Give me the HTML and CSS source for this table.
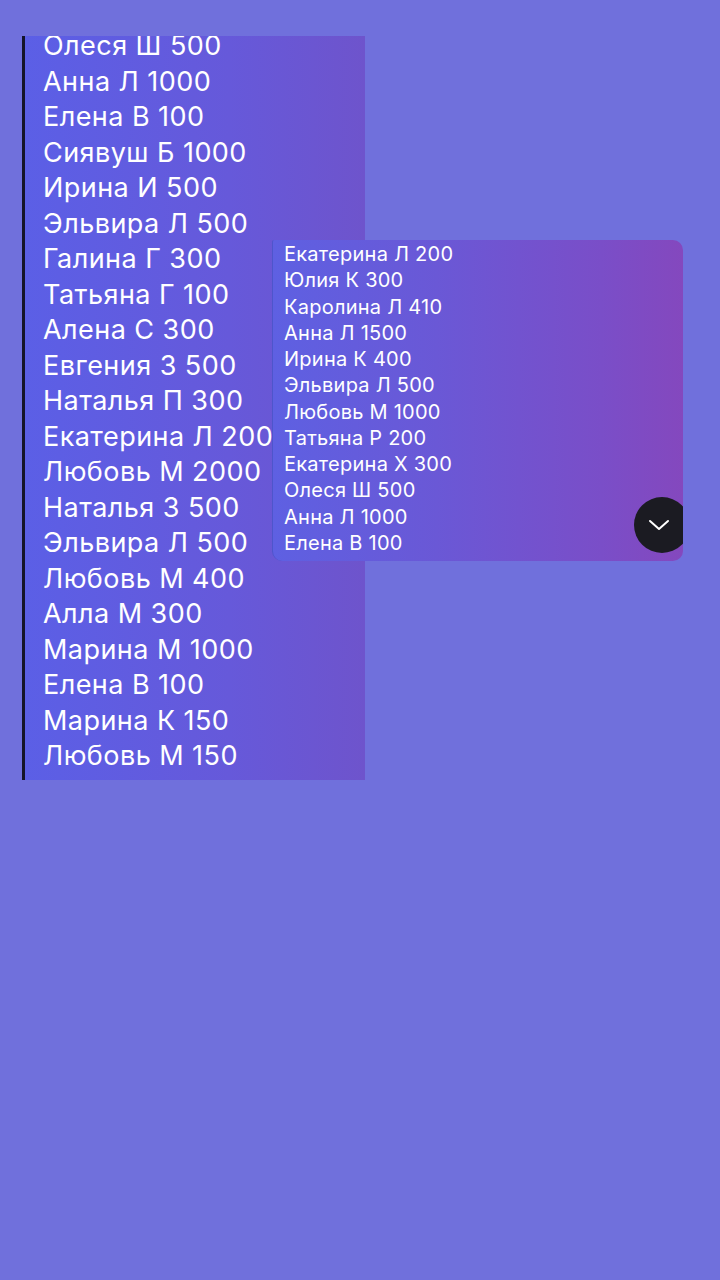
FILE: index.html
```html
<!DOCTYPE html>
<html lang="ru">
<head>
    <meta charset="UTF-8">
    <meta name="viewport" content="width=device-width, initial-scale=1.0">
    <title>Список</title>
    <link rel="stylesheet" href="styles.css">
</head>
<body>
    <div class="page">
        <div class="list-panel">
            <ul class="names">
                <li>Олеся Ш 500</li>
                <li>Анна Л 1000</li>
                <li>Елена В 100</li>
                <li>Сиявуш Б 1000</li>
                <li>Ирина И 500</li>
                <li>Эльвира Л 500</li>
                <li>Галина Г 300</li>
                <li>Татьяна Г 100</li>
                <li>Алена С 300</li>
                <li>Евгения З 500</li>
                <li>Наталья П 300</li>
                <li>Екатерина Л 200</li>
                <li>Любовь М 2000</li>
                <li>Наталья З 500</li>
                <li>Эльвира Л 500</li>
                <li>Любовь М 400</li>
                <li>Алла М 300</li>
                <li>Марина М 1000</li>
                <li>Елена В 100</li>
                <li>Марина К 150</li>
                <li>Любовь М 150</li>
            </ul>
        </div>

        <div class="popup-panel">
            <ul class="names small">
                <li>Екатерина Л 200</li>
                <li>Юлия К 300</li>
                <li>Каролина Л 410</li>
                <li>Анна Л 1500</li>
                <li>Ирина К 400</li>
                <li>Эльвира Л 500</li>
                <li>Любовь М 1000</li>
                <li>Татьяна Р 200</li>
                <li>Екатерина Х 300</li>
                <li>Олеся Ш 500</li>
                <li>Анна Л 1000</li>
                <li>Елена В 100</li>
            </ul>
            <button class="scroll-btn" aria-label="Вниз">
                <svg width="22" height="12" viewBox="0 0 22 12">
                    <path d="M2 2 L11 10 L20 2" fill="none" stroke="#fff" stroke-width="2" stroke-linecap="round" stroke-linejoin="round"/>
                </svg>
            </button>
        </div>
    </div>
</body>
</html>
```

FILE: styles.css
```css
body {
    margin: 0;
    padding: 0;
    background-color: #7070dc;
    font-family: Inter, "Noto Sans", sans-serif;
    color: #fff;
}
.page {
    position: relative;
    height: 1280px;
    padding-top: 36px;
    box-sizing: border-box;
}
.list-panel {
    margin-left: 22px;
    width: 340px;
    height: 744px;
    overflow: hidden;
    border-left: 3px solid #14142a;
    background: linear-gradient(90deg, #5b5fe6 0%, #6659da 60%, #6e54cc 100%);
}
.names {
    list-style: none;
    margin: -8px 0 0 0;
    padding: 0 0 0 18px;
    font-size: 27px;
    letter-spacing: 0.45px;
    line-height: 35.5px;
    white-space: nowrap;
}
.popup-panel {
    position: absolute;
    left: 272px;
    top: 240px;
    width: 411px;
    height: 321px;
    overflow: hidden;
    border-radius: 2px 10px 10px 10px;
    border-left: 1px solid #4e55cc;
    box-sizing: border-box;
    background: linear-gradient(90deg, #5e60e2 0%, #6a58d6 40%, #7a4ec8 80%, #8448be 100%);
}
.names.small {
    margin: 1px 0 0 0;
    padding-left: 11px;
    font-size: 20px;
    letter-spacing: 0.25px;
    line-height: 26.25px;
}
.scroll-btn {
    position: absolute;
    left: 361px;
    top: 257px;
    width: 56px;
    height: 56px;
    border: none;
    border-radius: 50%;
    background-color: #1b1b22;
    padding: 0 6px 0 0;
    display: flex;
    align-items: center;
    justify-content: center;
}
```
